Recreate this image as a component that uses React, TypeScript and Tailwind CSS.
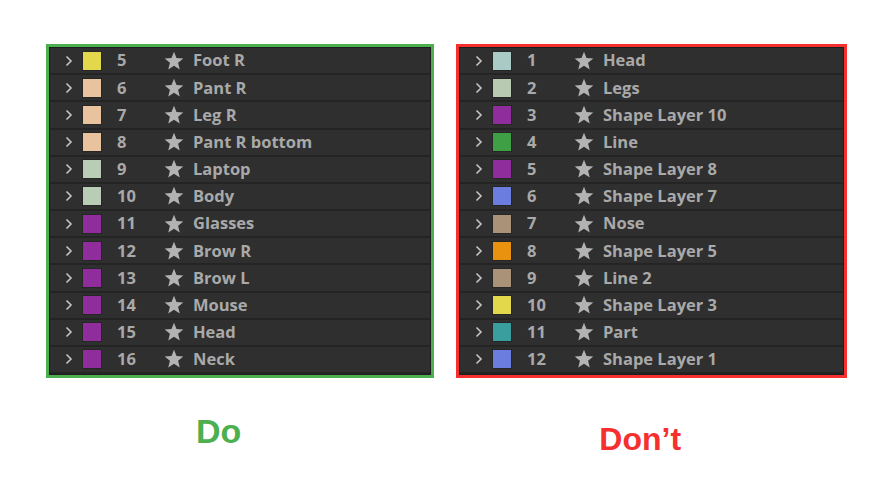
import React from 'react';

type Layer = { n: number; name: string; color: string };

const doLayers: Layer[] = [
  { n: 5, name: 'Foot R', color: '#e3d84b' },
  { n: 6, name: 'Pant R', color: '#e9c29e' },
  { n: 7, name: 'Leg R', color: '#e9c29e' },
  { n: 8, name: 'Pant R bottom', color: '#e9c29e' },
  { n: 9, name: 'Laptop', color: '#b8ccb6' },
  { n: 10, name: 'Body', color: '#b8ccb6' },
  { n: 11, name: 'Glasses', color: '#8e2d9b' },
  { n: 12, name: 'Brow R', color: '#8e2d9b' },
  { n: 13, name: 'Brow L', color: '#8e2d9b' },
  { n: 14, name: 'Mouse', color: '#8e2d9b' },
  { n: 15, name: 'Head', color: '#8e2d9b' },
  { n: 16, name: 'Neck', color: '#8e2d9b' },
];

const dontLayers: Layer[] = [
  { n: 1, name: 'Head', color: '#a9cac5' },
  { n: 2, name: 'Legs', color: '#b8cab2' },
  { n: 3, name: 'Shape Layer 10', color: '#8e2d9b' },
  { n: 4, name: 'Line', color: '#3f9f45' },
  { n: 5, name: 'Shape Layer 8', color: '#8e2d9b' },
  { n: 6, name: 'Shape Layer 7', color: '#6b7ee0' },
  { n: 7, name: 'Nose', color: '#a99277' },
  { n: 8, name: 'Shape Layer 5', color: '#e8920f' },
  { n: 9, name: 'Line 2', color: '#a99277' },
  { n: 10, name: 'Shape Layer 3', color: '#e3d84b' },
  { n: 11, name: 'Part', color: '#3a9d9e' },
  { n: 12, name: 'Shape Layer 1', color: '#6b7ee0' },
];

const Chevron = () => (
  <svg width="8" height="12" viewBox="0 0 8 12" className="shrink-0">
    <path d="M1.5 1.5 L6 6 L1.5 10.5" fill="none" stroke="#c4c4c4" strokeWidth="1.6" />
  </svg>
);

const Star = () => (
  <svg width="20" height="20" viewBox="0 0 24 24" className="shrink-0">
    <path
      d="M12 0.8 L15 8.4 L23.2 8.9 L16.9 14.1 L18.9 22.2 L12 17.8 L5.1 22.2 L7.1 14.1 L0.8 8.9 L9 8.4 Z"
      fill="#b3b3b3"
    />
  </svg>
);

const LayerPanel: React.FC<{ layers: Layer[]; border: string; width: string }> = ({
  layers,
  border,
  width,
}) => (
  <div className={`${width} h-[334px] border-[3px] ${border} bg-[#1d1d1d] p-px flex flex-col`}>
    {layers.map((l) => (
      <div
        key={l.n + l.name}
        className="flex-1 flex items-center bg-[#2f2f2f] border-b-2 border-[#242424] text-[#a9a9a9] font-bold text-[16.5px] leading-none"
      >
        <div className="w-[15px] shrink-0" />
        <Chevron />
        <div className="w-[9px] shrink-0" />
        <div
          className="w-[20px] h-[20px] shrink-0 border border-[#262626]"
          style={{ backgroundColor: l.color }}
        />
        <div className="w-[15px] shrink-0" />
        <div className="w-[47px] shrink-0 whitespace-nowrap">{l.n}</div>
        <Star />
        <div className="ml-[9px] whitespace-nowrap">{l.name}</div>
      </div>
    ))}
  </div>
);

export default function App() {
  return (
    <div
      className="w-[892px] h-[490px] bg-white relative"
      style={{ fontFamily: '"Open Sans", "Noto Sans", sans-serif' }}
    >
      <div className="flex pt-[44px] pl-[46px] gap-[22px]">
        <LayerPanel layers={doLayers} border="border-[#4caf50]" width="w-[388px]" />
        <LayerPanel layers={dontLayers} border="border-[#f5302f]" width="w-[391px]" />
      </div>
      <div
        className="flex font-bold"
        style={{ fontFamily: '"Liberation Sans", Arial, sans-serif' }}
      >
        <div className="ml-[196px] mt-[36px] text-[34px] text-[#4caf50] leading-none">Do</div>
        <div className="ml-[358px] mt-[45px] text-[32px] text-[#f5302f] leading-none">Don’t</div>
      </div>
    </div>
  );
}
